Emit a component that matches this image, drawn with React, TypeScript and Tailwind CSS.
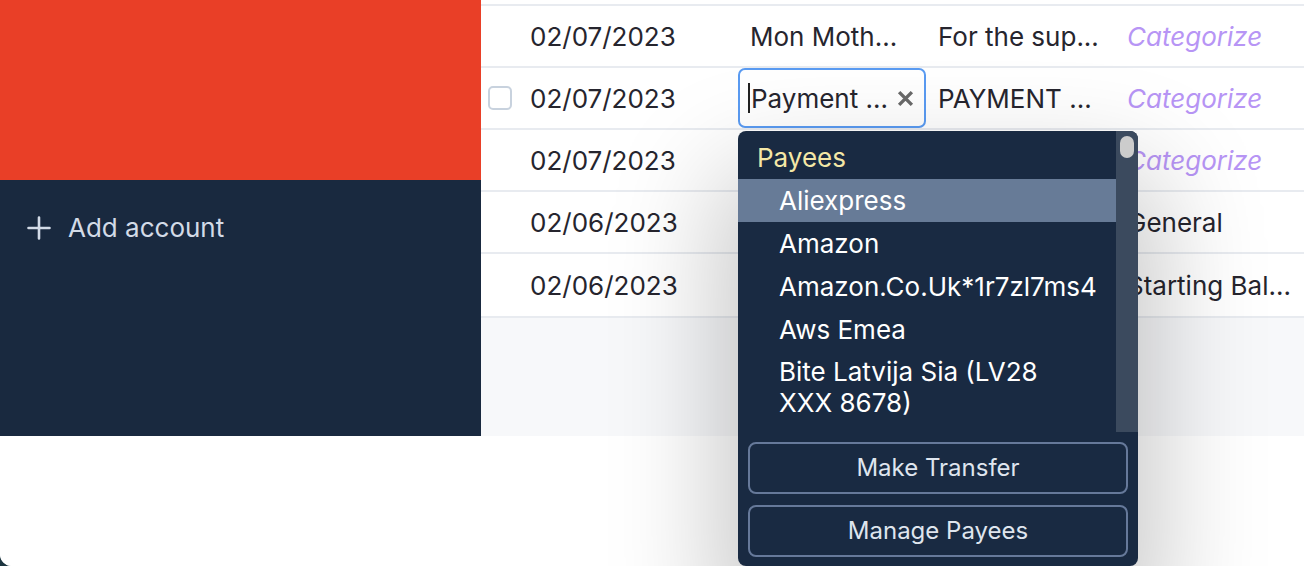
import React from "react";

const rows = [
  { date: "02/07/2023", payee: "Mon Moth...", notes: "For the sup...", cat: "Categorize", italic: true },
  { date: "02/07/2023", payee: "Payment ...", notes: "PAYMENT ...", cat: "Categorize", italic: true, editing: true },
  { date: "02/07/2023", payee: "", notes: "", cat: "Categorize", italic: true },
  { date: "02/06/2023", payee: "", notes: "", cat: "General", italic: false },
  { date: "02/06/2023", payee: "", notes: "", cat: "Starting Bal...", italic: false },
];

const payees = ["Aliexpress", "Amazon", "Amazon.Co.Uk*1r7zl7ms4", "Aws Emea"];

export default function App() {
  return (
    <div className="h-[566px] w-[1304px] overflow-hidden bg-[#1d3640] font-['Inter',sans-serif]">
      <div className="relative flex h-full flex-col overflow-hidden rounded-bl-[12px] bg-white">
        <div className="flex h-[436px]">
          {/* Sidebar */}
          <div className="flex w-[481px] flex-col">
            <div className="h-[180px] bg-[#e93f27]" />
            <div className="flex-1 bg-[#19293f]">
              <div className="flex h-[95px] items-center pl-[27px] text-[26px] text-[#d3dbe7]">
                <svg width="24" height="24" viewBox="0 0 24 24" className="mr-[17px]">
                  <path d="M12 1.5V22.5M1.5 12H22.5" stroke="#d3dbe7" strokeWidth="2.6" strokeLinecap="round" />
                </svg>
                <span>Add account</span>
              </div>
            </div>
          </div>
          {/* Table */}
          <div className="flex flex-1 flex-col bg-[#f7f8fa]">
            <div className="h-[4px] bg-white" />
            {rows.map((r, i) => (
              <div
                key={i}
                className={`flex h-[62px] items-stretch border-t-2 border-[#e8ebf0] bg-white text-[26px] text-[#26252e] ${i === rows.length - 1 ? "box-content border-b-2" : ""}`}
              >
                <div className="flex w-[38px] items-center pl-[7px]">
                  {r.editing && (
                    <div className="h-[24px] w-[24px] rounded-[5px] border-2 border-[#c8d2de] bg-white" />
                  )}
                </div>
                <div className="flex w-[219px] items-center pl-[11px] whitespace-nowrap">{r.date}</div>
                {r.editing ? (
                  <div className="flex w-[188px] items-center rounded-[7px] border-2 border-[#5a9bf2] bg-white pl-[8px] pr-[10px] whitespace-nowrap">
                    <span className="mr-[1px] inline-block h-[30px] w-[2px] bg-[#222]" />
                    <span className="flex-1">{r.payee}</span>
                    <svg width="17" height="17" viewBox="0 0 16 16">
                      <path d="M2 2L14 14M14 2L2 14" stroke="#6a6a6a" strokeWidth="3.2" />
                    </svg>
                  </div>
                ) : (
                  <div className="flex w-[188px] items-center overflow-hidden pl-[12px] whitespace-nowrap">{r.payee}</div>
                )}
                <div className="flex w-[189px] items-center overflow-hidden pl-[12px] whitespace-nowrap">{r.notes}</div>
                <div
                  className={`flex flex-1 items-center overflow-hidden pl-[12px] whitespace-nowrap ${r.italic ? "italic text-[#b795f5]" : ""}`}
                >
                  {r.cat}
                </div>
              </div>
            ))}
          </div>
        </div>
        <div className="flex-1 bg-white" />

        {/* Dropdown */}
        <div className="absolute left-[738px] top-[131px] flex h-[435px] w-[400px] flex-col overflow-hidden rounded-[8px] bg-[#192a42] shadow-[0_60px_110px_20px_rgba(0,0,0,0.22)]">
          <div className="relative h-[301px]">
            <div className="absolute right-0 top-0 h-full w-[22px] bg-[#3b4a5e]">
              <div className="ml-[4px] mt-[5px] h-[22px] w-[14px] rounded-full bg-[#cccccc]" />
            </div>
            <div className="mr-[22px] text-[26px]">
              <div className="flex h-[48px] items-center pl-[19px] pt-[4px] text-[#f4e7a6]">Payees</div>
              {payees.map((p, i) => (
                <div
                  key={p}
                  className={`flex h-[43px] items-center pl-[41px] text-white whitespace-nowrap ${i === 0 ? "bg-[#677b97]" : ""}`}
                >
                  {p}
                </div>
              ))}
              <div className="pl-[41px] pt-[5px] leading-[31px] text-white">
                Bite Latvija Sia (LV28
                <br />
                XXX 8678)
              </div>
            </div>
          </div>
          <div className="flex flex-col gap-[11px] px-[10px] pt-[10px]">
            <button className="h-[52px] rounded-[8px] border-2 border-[#66799a] text-[24px] text-[#dfe5ee]">
              Make Transfer
            </button>
            <button className="h-[52px] rounded-[8px] border-2 border-[#66799a] text-[24px] text-[#dfe5ee]">
              Manage Payees
            </button>
          </div>
        </div>
      </div>
    </div>
  );
}
